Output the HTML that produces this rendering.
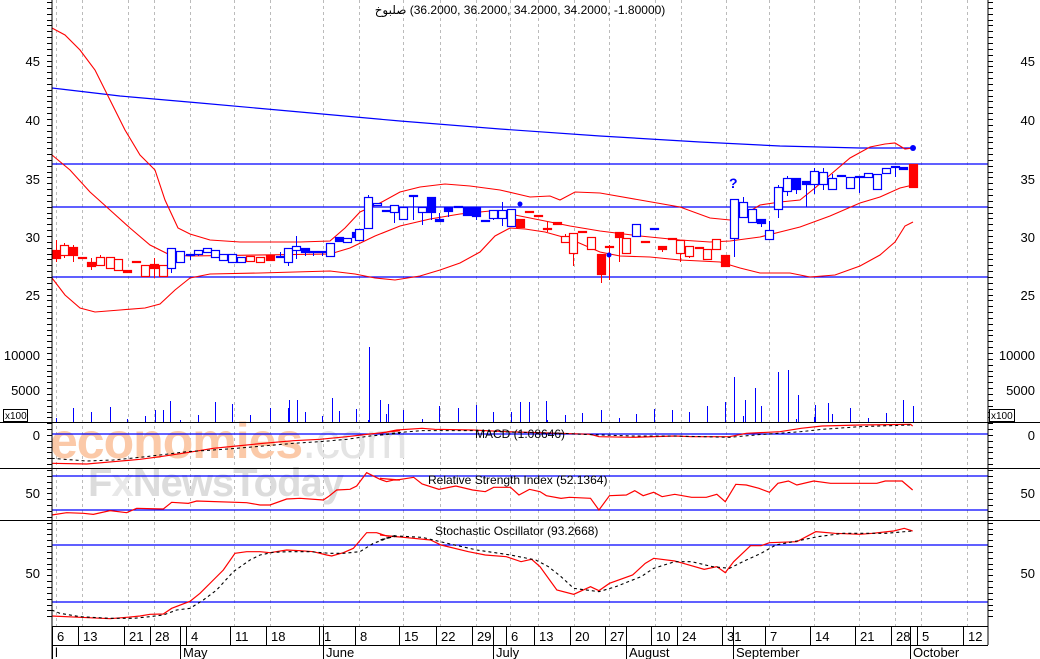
<!DOCTYPE html>
<html><head><meta charset="utf-8"><style>
html,body{margin:0;padding:0;background:#fff;width:1040px;height:659px;overflow:hidden;position:relative}
svg{display:block;font-family:"Liberation Sans","DejaVu Sans",sans-serif}
#title{position:absolute;left:0;width:1040px;top:3px;text-align:center;font:12px "Liberation Sans","DejaVu Sans",sans-serif;direction:ltr;color:#000}
</style></head><body>
<svg id="s" width="1040" height="659" viewBox="0 0 1040 659" xmlns="http://www.w3.org/2000/svg">
<rect width="1040" height="659" fill="#fff"/>
<g id="grid" stroke="#bbb" stroke-dasharray="3,3" stroke-width="1"></g>
<text x="50" y="458" font-size="50" fill="#fbc9a8" font-weight="bold" letter-spacing="-1">economies<tspan fill="#e4e4e4" font-weight="normal">.com</tspan></text>
<text x="88" y="496" font-size="40" fill="#dcdcdc" font-weight="bold" letter-spacing="-1">F<tspan fill="#e8e8e8">x</tspan>NewsToday</text>
<g stroke="#0000ff" stroke-width="1.2">
<line x1="52" y1="164" x2="988" y2="164"/><line x1="52" y1="207" x2="988" y2="207"/><line x1="52" y1="277" x2="988" y2="277"/>
<line x1="52" y1="434" x2="988" y2="434"/>
<line x1="52" y1="476" x2="988" y2="476"/><line x1="52" y1="510" x2="988" y2="510"/>
<line x1="52" y1="545" x2="988" y2="545"/><line x1="52" y1="602" x2="988" y2="602"/>
</g>
<g id="lines" fill="none"></g>
<g id="vol" stroke="#0000ff" stroke-width="1"></g>
<g id="candles"></g>
<g stroke="#000" stroke-width="1">
<line x1="52" y1="0" x2="52" y2="659"/><line x1="988" y1="0" x2="988" y2="645"/>
<line x1="0" y1="422.5" x2="1040" y2="422.5"/>
<line x1="0" y1="468.5" x2="1040" y2="468.5"/>
<line x1="0" y1="520.5" x2="1040" y2="520.5"/>
<line x1="52" y1="626.5" x2="988" y2="626.5"/>
<line x1="52" y1="645.5" x2="988" y2="645.5"/>
</g>
<g id="ticks" stroke="#000" stroke-width="1"></g>
<rect x="3.5" y="409.5" width="24" height="12" fill="#fff" stroke="#000"/>
<text x="5" y="419" font-size="10">x100</text>
<rect x="989.5" y="409.5" width="25" height="12" fill="#fff" stroke="#000"/>
<text x="991" y="419" font-size="10">x100</text>
<g font-size="13" fill="#000">
<g text-anchor="end">
<text x="40" y="66">45</text><text x="40" y="125">40</text><text x="40" y="184">35</text><text x="40" y="242">30</text><text x="40" y="300">25</text>
<text x="40" y="360">10000</text><text x="40" y="395">5000</text><text x="40" y="440">0</text><text x="40" y="498">50</text><text x="40" y="578">50</text>
<text x="1035" y="66">45</text><text x="1035" y="125">40</text><text x="1035" y="184">35</text><text x="1035" y="242">30</text><text x="1035" y="300">25</text>
<text x="1035" y="360">10000</text><text x="1035" y="395">5000</text><text x="1035" y="440">0</text><text x="1035" y="498">50</text><text x="1035" y="578">50</text>
</g>
<text x="475" y="438" font-size="12">MACD (1.08646)</text>
<text x="428" y="484" font-size="12">Relative Strength Index (52.1364)</text>
<text x="435" y="535" font-size="12">Stochastic Oscillator (93.2668)</text>
<text x="729" y="188" font-size="14" font-weight="bold" fill="#0000ff">?</text>
</g>
<g id="axis" font-size="13"></g>
</svg>
<div id="title"><bdi>صلبوخ</bdi> (36.2000, 36.2000, 34.2000, 34.2000, -1.80000)</div>
<script>
var NS="http://www.w3.org/2000/svg";
function el(p,t,a,txt){var e=document.createElementNS(NS,t);for(var k in a)e.setAttribute(k,a[k]);if(txt!=null)e.textContent=txt;document.getElementById(p).appendChild(e);return e;}
var gx=[56,82,128,154,190,234,270,323,359,403,440,476,510,538,574,609,655,681,726,769,814,859,895,921,967];
gx.forEach(function(x){el("grid","line",{x1:x+.5,y1:0,x2:x+.5,y2:626});});
var dl=[[56,"6"],[82,"13"],[128,"21"],[154,"28"],[190,"4"],[234,"11"],[270,"18"],[323,"1"],[359,"8"],[403,"15"],[440,"22"],[476,"29"],[510,"6"],[538,"13"],[574,"20"],[609,"27"],[655,"10"],[681,"24"],[726,"31"],[769,"7"],[814,"14"],[859,"21"],[895,"28"],[921,"5"],[967,"12"]];
dl.forEach(function(d){el("ticks","line",{x1:d[0]-3.5,y1:627,x2:d[0]-3.5,y2:645});el("axis","text",{x:d[0]+1,y:641},d[1]);});
var ml=[[52,"l"],[180,"May"],[323,"June"],[493,"July"],[626,"August"],[733,"September"],[910,"October"]];
ml.forEach(function(d){el("ticks","line",{x1:d[0]+.5,y1:627,x2:d[0]+.5,y2:659});el("axis","text",{x:d[0]+3,y:657},d[1]);});
for(var y=2;y<620;y+=5.85){el("ticks","line",{x1:47,y1:Math.round(y)+.5,x2:52,y2:Math.round(y)+.5});el("ticks","line",{x1:988,y1:Math.round(y)+.5,x2:993,y2:Math.round(y)+.5});}
function pl(pts,col,dash,w){el("lines","polyline",{points:pts.map(function(p){return p.join(",")}).join(" "),stroke:col,"stroke-width":w||1.2,"stroke-dasharray":dash||"none"});}
function z3(a){return a.map(function(p){return [380+p[0]/2.375,400+p[1]/3]});}
function z1(a){return a.map(function(p){return [p[0]/3,400+p[1]/3]});}
pl([[52,88],[120,96],[200,103],[300,112],[400,121],[500,129],[600,136],[700,142],[780,146],[860,148],[913,148]],"#0000ff",null,1.2);
pl([[52,28],[65,35],[80,50],[95,70],[110,100],[125,130],[140,155],[155,170],[165,200],[178,228],[190,234],[210,240],[240,242],[300,242],[330,241],[345,228],[360,212],[380,203],[400,192],[420,187],[445,184],[470,186],[500,190],[530,197],[550,196],[560,200],[575,192],[600,193],[640,200],[680,207],[710,218],[730,220],[745,214],[760,205],[780,202],[800,200],[815,188],[830,175],[850,158],[870,147],[885,144],[895,143],[905,149],[913,148]],"#ff0000",null,1.1);
pl([[52,155],[70,170],[90,192],[110,210],[130,228],[150,245],[170,255],[190,256],[330,254],[350,248],[375,236],[400,226],[430,219],[460,214],[490,211],[510,214],[540,220],[570,226],[600,231],[640,236],[680,240],[710,242],[730,241],[760,237],[780,232],[800,227],[830,216],[860,203],[880,197],[900,188],[913,185]],"#ff0000",null,1.1);
pl([[52,278],[65,295],[80,308],[95,312],[120,310],[145,308],[160,304],[175,290],[190,278],[210,274],[260,273],[330,271],[355,274],[375,278],[395,280],[420,276],[440,270],[460,263],[480,252],[495,236],[510,228],[525,229],[545,232],[570,239],[600,252],[620,256],[650,257],[680,260],[720,262],[740,268],[760,273],[790,273],[810,277],[835,275],[860,266],[880,255],[895,242],[905,226],[913,222]],"#ff0000",null,1.1);
pl(z1([[155,190],[260,192],[340,185],[420,178],[480,170],[560,158],[640,145],[710,138],[790,130],[880,122],[960,118],[1040,110],[1110,102],[1200,92]]),"#ff0000");
pl(z1([[155,175],[260,183],[340,180],[420,172],[480,165],[560,155],[640,150],[710,145],[790,138],[880,130],[960,125],[1040,118],[1110,108],[1200,100]]),"#000","3,3",1);
pl(z3([[0,100],[40,90],[100,85],[130,88],[220,90],[300,95],[430,100],[500,103],[520,110],[600,112],[700,108],[740,110],[830,110],[870,100],[950,95],[1000,85],[1050,78],[1140,75],[1260,73],[1265,78]]),"#ff0000");
pl(z3([[0,105],[40,98],[100,92],[220,92],[300,96],[430,100],[500,104],[600,108],[700,108],[830,112],[900,104],[1000,95],[1050,88],[1140,80],[1260,75]]),"#000","3,3",1);
pl(z1([[155,345],[200,338],[250,340],[280,343],[330,332],[380,338],[410,325],[490,327],[515,307],[565,310],[590,303],[740,308],[780,315],[810,315],[860,297],[900,295],[970,300],[985,290],[1010,270],[1050,268],[1070,258],[1100,218],[1140,238],[1160,245],[1180,240],[1200,240]]).concat(z3([[0,235],[40,240],[80,232],[100,252],[140,268],[180,258],[220,270],[250,275],[270,262],[310,262],[330,285],[355,268],[380,275],[395,287],[430,295],[450,292],[500,295],[520,330],[545,287],[585,285],[605,272],[625,287],[650,277],[670,290],[700,283],[740,292],[775,292],[800,283],[820,305],[845,253],[870,255],[900,265],[925,277],[945,250],[970,243],[990,255],[1030,243],[1070,250],[1180,250],[1200,243],[1240,243],[1265,270]])),"#ff0000");
pl(z1([[155,648],[240,652],[330,656],[380,652],[420,648],[450,643],[490,642],[515,625],[570,604],[600,580],[640,540],[670,510],[705,460],[740,455],[780,455],[810,458],[860,450],[900,452],[940,455],[980,465],[995,468],[1030,458],[1060,445],[1100,398],[1130,398],[1160,408],[1200,411]]).concat(z3([[0,405],[40,410],[120,420],[145,435],[210,455],[250,465],[300,470],[335,485],[360,478],[380,500],[420,570],[460,583],[500,560],[520,572],[545,550],[600,525],[630,490],[650,475],[700,483],[720,490],[770,508],[800,500],[820,518],[840,485],[880,437],[905,437],[925,428],[990,425],[1035,395],[1080,400],[1140,403],[1170,400],[1220,393],[1245,385],[1265,393]])),"#ff0000");
pl(z1([[155,630],[180,640],[240,650],[330,655],[400,655],[450,650],[490,645],[530,630],[570,625],[610,600],[650,570],[700,515],[750,480],[780,465],[820,457],[870,455],[930,455],[990,460],[1030,460],[1080,455],[1120,430],[1190,405]]).concat(z3([[0,420],[40,408],[100,412],[160,430],[230,450],[310,465],[370,480],[400,500],[430,530],[460,565],[520,575],[560,560],[620,530],[650,505],[700,485],[740,485],[790,500],[830,505],[870,480],[905,460],[940,435],[990,423],[1040,410],[1100,400],[1200,400],[1265,393]])),"#000","3,3",1.1);
var R="#ff0000",B="#0000ff";
var C=[[56,250,258,240,262,R,1],[64,245,255,243,258,R,0],[73,247,255,245,262,R,1],[82,257,258,257,258,R,1],[91,262,266,258,270,R,1],[100,257,265,255,265,R,0],[110,257,268,257,268,R,0],[118,259,270,259,270,R,0],[127,270,272,270,272,R,1],[136,261,262,261,262,R,1],[145,265,276,265,276,R,0],[154,264,268,258,278,R,1],[163,265,276,265,276,R,0],
[171,248,268,248,273,B,0],[180,251,262,251,262,B,0],[190,254,255,254,260,B,1],[198,250,254,250,256,B,0],[207,248,252,248,252,B,0],[215,250,257,250,258,B,0],[223,254,260,254,261,B,0],[232,254,262,254,262,B,0],[241,257,262,257,262,B,0],[250,256,261,256,261,R,0],[260,257,262,257,262,R,0],[270,255,260,255,260,R,1],[280,256,257,252,258,B,1],[288,248,262,248,266,B,0],[296,246,250,236,259,B,0],[305,248,252,248,256,B,1],[313,251,252,251,256,B,1],[322,251,252,251,256,B,1],[330,243,256,243,256,B,0],[339,237,241,237,241,B,1],[347,238,242,238,242,B,0],[356,232,237,232,237,B,1],
[359,229,240,229,240,B,0],[368,197,228,195,229,B,0],[377,203,205,203,205,B,0],[386,210,211,210,211,B,1],[394,205,212,205,223,B,0],[403,207,219,207,219,B,0],[413,195,196,195,220,B,1],[422,207,212,207,225,B,0],[431,197,212,197,220,B,1],[439,219,221,213,221,B,1],[448,207,211,207,217,B,1],[458,206,207,206,207,B,1],[467,207,215,207,215,B,1],[476,207,216,207,220,B,1],[485,220,221,220,221,B,1],[493,210,218,210,220,B,0],[502,210,218,202,226,B,0],[511,209,226,209,226,B,0],[520,219,227,219,227,R,1],[529,211,212,211,212,R,1],[538,215,216,215,216,R,1],[547,228,229,222,232,R,1],[557,222,224,222,224,R,1],[565,236,242,234,242,R,0],[573,233,253,233,266,R,0],[582,231,232,231,232,R,1],[591,237,249,237,249,R,0],[601,254,274,254,283,R,1],[609,246,247,245,280,R,1],[619,232,237,232,262,R,1],[626,238,253,238,253,R,0],[636,224,236,224,236,B,0],[645,241,242,241,242,R,1],[654,228,229,228,229,B,1],[662,246,249,246,252,R,1],[672,238,239,238,239,R,1],[680,240,253,240,262,R,0],[689,246,256,246,258,R,0],[699,247,248,247,248,R,1],[707,249,259,249,259,R,0],[716,239,249,239,249,R,0],[725,255,266,255,266,R,1],[734,199,238,199,257,B,0],[743,202,217,197,217,B,0],[752,209,222,209,222,B,0],[761,219,223,219,227,B,1],[769,230,239,221,239,B,0],[778,187,209,185,218,B,0],[787,178,191,176,196,B,0],[796,178,189,178,194,B,1],[806,181,184,181,207,B,1],[814,171,184,168,194,B,0],[823,172,184,168,190,B,0],[832,178,189,174,189,B,0],[841,175,176,175,176,B,1],[850,177,188,177,188,B,0],[859,176,177,176,193,B,1],[868,173,177,173,177,B,0],[877,174,189,174,189,B,0],[886,168,173,168,173,B,0],[895,166,167,166,177,B,1],[903,167,169,167,169,B,1],[913,164,187,164,187,R,1]];
C.forEach(function(c){var x=c[0];el("candles","line",{x1:x+.5,y1:c[3],x2:x+.5,y2:c[4],stroke:c[5],"stroke-width":1});
el("candles","rect",{x:x-3.5,y:c[1]+.5,width:8,height:Math.max(1,c[2]-c[1]),fill:c[6]?c[5]:"#fff",stroke:c[5],"stroke-width":1.2});});
el("candles","circle",{cx:609,cy:255,r:2.5,fill:B});el("candles","circle",{cx:520,cy:204,r:2.5,fill:B});el("candles","circle",{cx:913,cy:148,r:3,fill:B});
C.forEach(function(c,i){if(i%2)return;var h=[4,2,10,3,2,12,3,6,1,5,0,8,2][i%13];el("vol","line",{x1:c[0]+.5,y1:422,x2:c[0]+.5,y2:422-h-((i*37)%14)});});
[[369,347],[332,398],[289,400],[297,400],[380,400],[388,404],[778,372],[788,370],[734,377],[755,388],[745,400],[828,403],[170,401],[155,410],[520,402],[546,401],[707,406],[798,395],[815,405],[913,406]].forEach(function(v){el("vol","line",{x1:v[0]+.5,y1:422,x2:v[0]+.5,y2:v[1]});});
</script>
</body></html>
